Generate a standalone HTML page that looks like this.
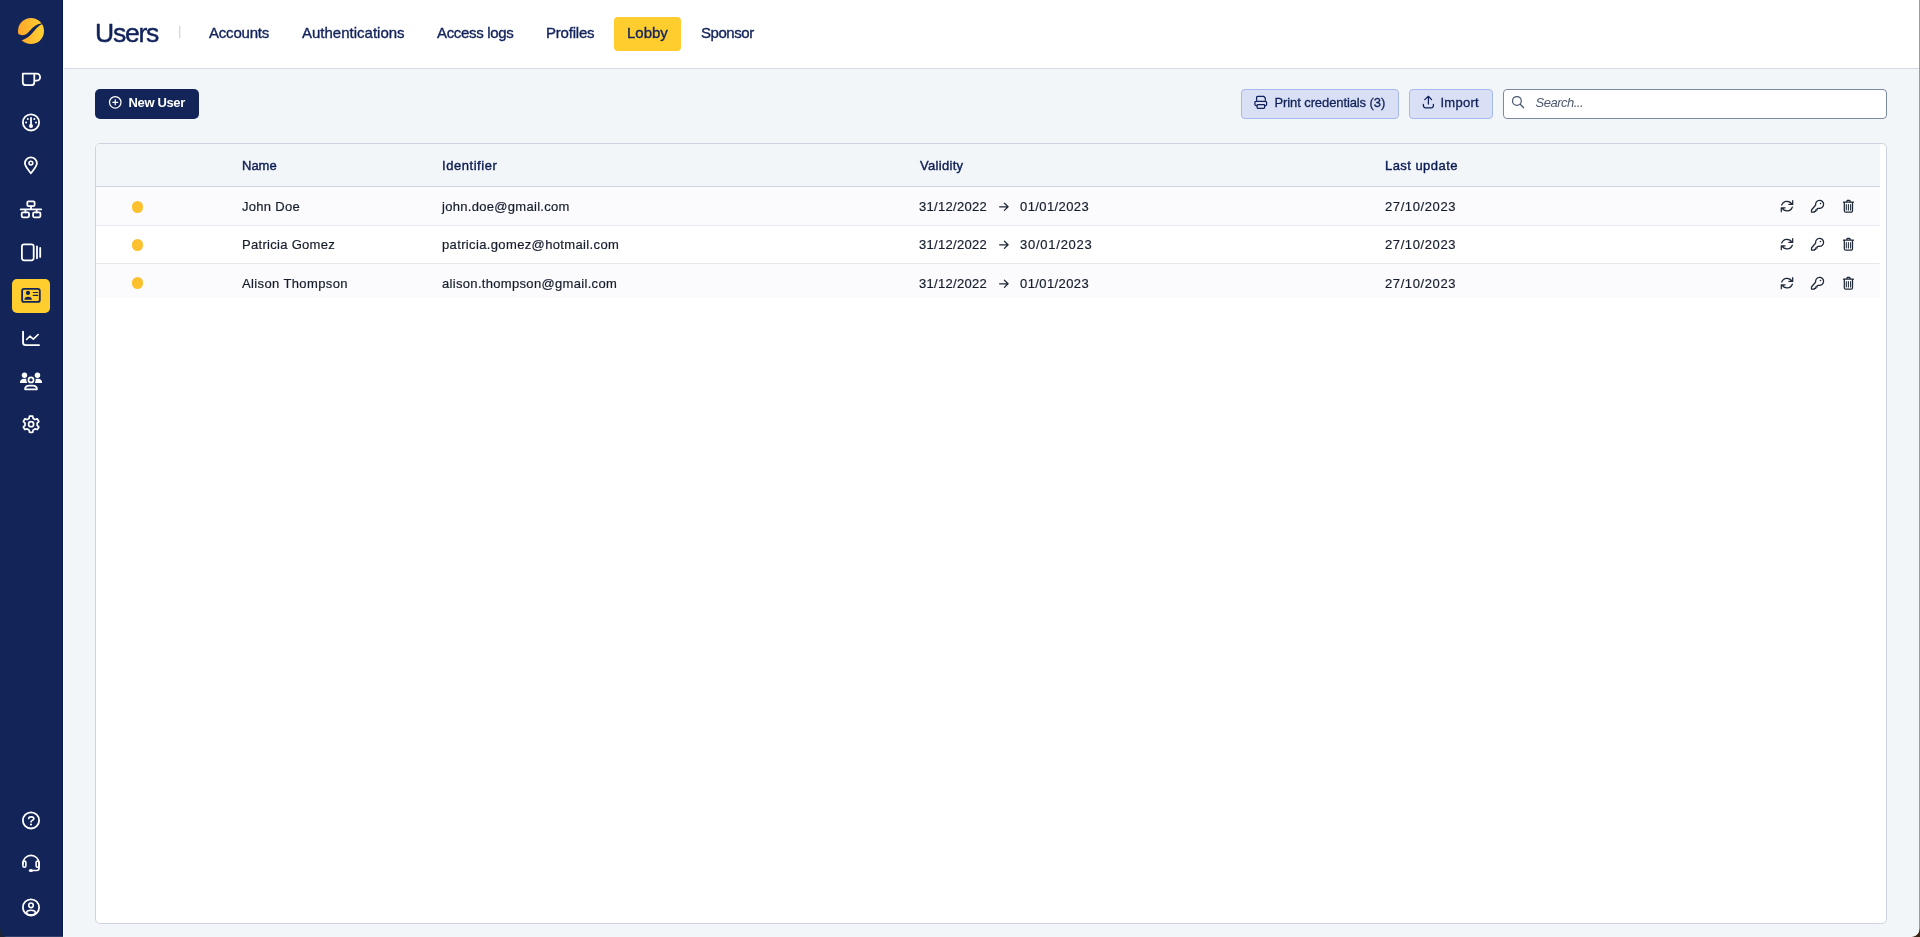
<!DOCTYPE html>
<html lang="en">
<head>
<meta charset="utf-8">
<title>Users - Lobby</title>
<style>
*{box-sizing:border-box;margin:0;padding:0}
html,body{width:1920px;height:937px;overflow:hidden}
body{position:relative;will-change:transform;background:#f2f6f9;font-family:"Liberation Sans",Arial,sans-serif;color:#1f2937}
.abs{position:absolute}
/* ---------- sidebar ---------- */
#side{position:absolute;left:0;top:0;width:63px;height:937px;background:#132558;border-right:1px solid #021a4e}
#sidegap{position:absolute;left:63px;top:0;width:1px;height:937px;background:#fff}
#side svg{position:absolute;left:0;top:0;overflow:visible}
#active{position:absolute;left:12px;top:279px;width:38px;height:34px;border-radius:5px;background:#ffcd2e}
/* ---------- header ---------- */
#head{position:absolute;left:64px;top:0;width:1856px;height:69px;background:#fff;border-bottom:1px solid #d4dae3}
#title{font-weight:normal;position:absolute;left:31px;top:17px;-webkit-text-stroke:0.45px #11225a;font-size:26.5px;line-height:33px;color:#11225a;letter-spacing:-1.25px;white-space:nowrap}
#sep{position:absolute;left:115px;top:26px;width:1px;height:12px;background:#d4dae3;box-shadow:1px 0 0 #eceff3}
.tab{-webkit-text-stroke:0.35px #11225a;position:absolute;top:17px;height:34px;line-height:32px;font-size:15px;color:#11225a;white-space:nowrap;padding:0 13px;border-radius:4px}
.tab.on{background:#ffcd2e;-webkit-text-stroke:0.35px #11225a}
/* ---------- toolbar ---------- */
.btn{display:block;font-family:inherit;border:0;padding:0;margin:0;text-align:left;cursor:pointer;position:absolute;top:89px;height:30px;border-radius:4px;font-size:13px;line-height:28px;white-space:nowrap}
#new{left:95px;width:104px;border-radius:5px;background:#132558;color:#fff;font-weight:bold}
#new span{position:absolute;left:33.5px;top:0;letter-spacing:-0.36px}
.lite{background:#d9e0f5;border:1px solid #a5b9ec;color:#11225a}
.lite span{position:absolute;top:-1px;-webkit-text-stroke:0.3px #11225a}
#search{position:absolute;left:1503px;top:89px;width:384px;height:30px;border:1px solid #7c8aa0;border-radius:4px;background:#fff}
#search span{position:absolute;left:31.5px;top:-1px;line-height:28px;font-size:13px;font-style:italic;color:#4d5970;letter-spacing:-0.5px}
/* ---------- table ---------- */
#card{position:absolute;left:95px;top:143px;width:1792px;height:781px;border:1px solid #cdd4df;border-radius:5px;background:#fff;overflow:hidden}
#thead{position:absolute;left:0;top:0;width:1784px;height:43px;background:#f2f6f9;border-bottom:1px solid #cfd6e1}
.th{position:absolute;top:0;line-height:44px;font-size:13px;color:#0d1c54;-webkit-text-stroke:0.4px #0d1c54;white-space:nowrap}
.row{position:absolute;left:0;width:1784px;font-size:13px;color:#161e2d;-webkit-text-stroke:0.2px #161e2d}
.row.odd{background:#fbfbfd}
.row.bb{border-bottom:1px solid #e6e8ee}
.row span{position:absolute;top:0;white-space:nowrap}
.dot{position:absolute;left:35.9px;width:11.5px;height:11.5px;border-radius:50%;background:#fdc02f}
.row svg{position:absolute;overflow:visible}
/* window corners */
.corner{position:absolute;bottom:0;width:11px;height:11px}
#wr{position:absolute;right:0;top:0;width:1px;height:937px;background:#9c9c9c}
#wb{position:absolute;left:0;bottom:0;width:1920px;height:1px;background:rgba(255,255,255,.13)}
</style>
</head>
<body>

<!-- ================= SIDEBAR ================= -->
<nav id="side" aria-label="Main navigation">
  <div id="active"></div>
  <svg width="63" height="937" viewBox="0 0 63 937" fill="none" stroke="#fff" stroke-width="1.8" stroke-linecap="round" stroke-linejoin="round">
    <defs><linearGradient id="lg" x1="0" y1="0" x2="1" y2="0"><stop offset="0" stop-color="#ffa52a"/><stop offset="1" stop-color="#ffd233"/></linearGradient></defs>
    <circle cx="31" cy="31" r="13" fill="url(#lg)" stroke="none"/>
    <path d="M16.5,33 C19,34.6 21.5,35.6 24.1,35.1 C27,34.5 28.5,32 31,29.5 C34,26.5 37,23.9 43,23.1 L43,23.8 C38.9,25.2 36.9,28 33.9,31.2 C30.9,34.5 28.3,37.6 24.3,39.2 C22.7,39.9 21,40.4 19,41.2 Z" fill="#132558" stroke="none"/>
    <path d="M22.8,73.7 V82.2 a3,3 0 0 0 3,3 H31.3 a3,3 0 0 0 3,-3 V73.7 Z M34.3,73.7 H36.7 a3.43,3.43 0 0 1 0,6.86 H34.3"/>
    <circle cx="31" cy="122.4" r="8.1"/><path d="M31,117.8 V125"/><circle cx="31" cy="125.9" r="2" fill="#fff" stroke="none"/>
    <circle cx="27.8" cy="119.1" r="1" fill="#fff" stroke="none"/>
    <circle cx="34.3" cy="119.1" r="1" fill="#fff" stroke="none"/>
    <circle cx="26.1" cy="122.4" r="1" fill="#fff" stroke="none"/>
    <circle cx="36" cy="122.4" r="1" fill="#fff" stroke="none"/>
    <path d="M30.9,173.2 C28,169.5 24.9,166.4 24.9,163.3 a6,6 0 0 1 12,0 C36.9,166.4 33.8,169.5 30.9,173.2 Z"/><circle cx="30.9" cy="163.1" r="1.9" stroke-width="1.6"/>
    <rect x="27.3" y="201.3" width="7.3" height="4.9" rx="1.2"/><path d="M20.7,209.4 H41.2 M31,206.2 V209.4 M25.4,209.4 V212.4 M36.7,209.4 V212.4"/><rect x="21.7" y="212.4" width="7.3" height="4.9" rx="1.2"/><rect x="33.1" y="212.4" width="7.3" height="4.9" rx="1.2"/>
    <rect x="21.9" y="244.3" width="11.8" height="16" rx="2.2"/><path d="M37,246.4 V258.3 M40.2,248 V256.9"/>
    <g stroke="#132558"><rect x="22.1" y="288.9" width="17.7" height="13" rx="2"/><circle cx="28" cy="292.9" r="2.1" fill="#132558" stroke="none"/><path d="M24.4,299.75 a3.75,3 0 0 1 7.5,0 Z" fill="#132558" stroke="none"/><path d="M33.3,292.5 H37.7 M33.3,295.4 H37.7" stroke-width="1.2"/></g>
    <path d="M23.05,331.7 V342.5 a2.6,2.6 0 0 0 2.6,2.6 H39" stroke-width="1.9"/><path d="M26.6,339.5 L29.9,336.2 L33.3,339.2 L38.2,334.5" stroke-width="1.6"/>
    <g fill="#fff" stroke="none"><circle cx="24.5" cy="375.3" r="2.7"/><circle cx="37.45" cy="375.3" r="2.7"/><path d="M19.9,382.9 C19.9,380.3 21.6,378.8 24,378.8 H26.2 C26.2,380.5 26.6,381.8 27.2,382.9 Z"/><path d="M42.1,382.9 C42.1,380.3 40.4,378.8 38,378.8 H35.8 C35.8,380.5 35.4,381.8 34.8,382.9 Z"/></g>
    <circle cx="31" cy="379.9" r="2.55" stroke-width="1.7"/><path d="M25.05,389.35 C25.05,386.9 27,385.55 29.3,385.55 H32.7 C35,385.55 36.95,386.9 36.95,389.35 Z" stroke-width="1.7"/>
    <path d="M29.01,418.47 L29.54,416.20 A8.15,8.15 0 0 1 32.66,416.20 L33.19,418.47 A6.10,6.10 0 0 1 35.02,419.53 L37.25,418.85 A8.15,8.15 0 0 1 38.81,421.55 L37.11,423.14 A6.10,6.10 0 0 1 37.11,425.26 L38.81,426.85 A8.15,8.15 0 0 1 37.25,429.55 L35.02,428.87 A6.10,6.10 0 0 1 33.19,429.93 L32.66,432.20 A8.15,8.15 0 0 1 29.54,432.20 L29.01,429.93 A6.10,6.10 0 0 1 27.18,428.87 L24.95,429.55 A8.15,8.15 0 0 1 23.39,426.85 L25.09,425.26 A6.10,6.10 0 0 1 25.09,423.14 L23.39,421.55 A8.15,8.15 0 0 1 24.95,418.85 L27.18,419.53 A6.10,6.10 0 0 1 29.01,418.47Z" stroke-width="1.7"/><circle cx="31.1" cy="424.2" r="2.55" stroke-width="1.7"/>
    <circle cx="31" cy="820.4" r="8.1"/><path d="M28.7,818.6 C28.7,817.4 29.6,816.9 31,816.9 H31.6 C32.9,816.9 33.8,817.7 33.8,818.8 C33.8,820.4 31,820.3 31,822" stroke-width="1.6"/><circle cx="31" cy="824.5" r="1.05" fill="#fff" stroke="none"/>
    <g stroke-width="1.6"><path d="M22.9,864 V863.5 a8.1,8.1 0 0 1 16.2,0 V868 a2.5,2.5 0 0 1 -2.5,2.5 H31"/><rect x="22.9" y="861.1" width="3" height="6.1" rx="1.5"/><rect x="36.1" y="861.1" width="3" height="6.1" rx="1.5"/><ellipse cx="30.9" cy="870.5" rx="2.1" ry="1.5" fill="#fff" stroke="none"/></g>
    <circle cx="31" cy="907.4" r="8.1"/><circle cx="31" cy="905.3" r="2.3" stroke-width="1.6"/><ellipse cx="31" cy="912.6" rx="4.3" ry="2.3" stroke-width="1.6"/>
  </svg>
</nav>
<div id="sidegap"></div>

<!-- ================= HEADER ================= -->
<header id="head">
  <h1 id="title">Users</h1>
  <div id="sep"></div>
  <a class="tab" style="left:132px;letter-spacing:-0.2px">Accounts</a>
  <a class="tab" style="left:225px">Authentications</a>
  <a class="tab" style="left:360px;letter-spacing:-0.32px">Access logs</a>
  <a class="tab" style="left:469px;letter-spacing:-0.2px">Profiles</a>
  <a class="tab on" style="left:550px">Lobby</a>
  <a class="tab" style="left:624px;letter-spacing:-0.45px">Sponsor</a>
</header>

<!-- ================= TOOLBAR ================= -->
<button type="button" class="btn" id="new"><span>New User</span></button>
<button type="button" class="btn lite" style="left:1241px;width:158px"><span style="left:32.5px;letter-spacing:-0.1px">Print credentials (3)</span></button>
<button type="button" class="btn lite" style="left:1409px;width:84px"><span style="left:30.5px;letter-spacing:0.25px">Import</span></button>
<div id="search"><span>Search...</span></div>

<svg class="abs" style="left:0;top:0;overflow:visible" width="1" height="1" fill="none" stroke-linecap="round" stroke-linejoin="round" stroke-width="1.25">
<g stroke="#fff"><circle cx="115.25" cy="102.3" r="5.75"/><path d="M112.8,102.3 H117.7 M115.25,99.85 V104.75"/></g>
<g stroke="#11225a">
<path d="M1256.6,100.3 V97.4 a1.1,1.1 0 0 1 1.1,-1.1 H1263.6 L1265.3,98 V100.3"/>
<path d="M1256.9,105.5 H1256 a1.1,1.1 0 0 1 -1.1,-1.1 V102.5 a1.1,1.1 0 0 1 1.1,-1.1 H1265.5 a1.1,1.1 0 0 1 1.1,1.1 V104.4 a1.1,1.1 0 0 1 -1.1,1.1 H1264.7"/>
<rect x="1257.1" y="104.6" width="7.5" height="3.7" rx=".8"/>
<path d="M1423.4,104.3 V105.6 a2.2,2.2 0 0 0 2.2,2.2 H1431.2 a2.2,2.2 0 0 0 2.2,-2.2 V104.3 M1428.4,104 V96.6 M1424.7,99.6 L1428.4,96.3 L1431.6,99.6"/>
</g>
<g stroke="#4d5970"><circle cx="1516.9" cy="100.9" r="4.4"/><path d="M1520.2,104.2 L1523.7,107.8"/></g>
</svg>

<!-- ================= TABLE ================= -->
<div id="card" role="table">
  <div id="thead" role="row">
    <div class="th" role="columnheader" style="left:146px">Name</div>
    <div class="th" role="columnheader" style="left:346px;letter-spacing:0.55px">Identifier</div>
    <div class="th" role="columnheader" style="left:824px;letter-spacing:0.3px">Validity</div>
    <div class="th" role="columnheader" style="left:1289px;letter-spacing:0.45px">Last update</div>
  </div>
  <div role="row" class="row odd bb" style="top:43px;height:39px;line-height:40.6px"><i class="dot" style="top:14.35px"></i><span style="left:146px;letter-spacing:0.3px">John Doe</span><span style="left:346px;letter-spacing:0.3px">john.doe@gmail.com</span><span style="left:823px;letter-spacing:0.3px">31/12/2022</span><svg style="left:0;top:0" width="1" height="1"><g transform="translate(-96,-187)" fill="none" stroke="#1f2937" stroke-width="1.25" stroke-linecap="round" stroke-linejoin="round"><path d="M999.6,206.8 H1008 M1004.4,203.2 L1008.1,206.8 L1004.4,210.4"/><path d="M1781.7,205.0 A5.6,5.6 0 0 1 1791.9,204.3 M1792.7,200.6 V204.4 H1788.9 M1792.3,207.2 A5.6,5.6 0 0 1 1782.1,207.9 M1781.3,211.7 V207.8 H1785.1"/><path d="M1815.66,205.00 A4,4 0 1 1 1818.9,208.24 L1817.2,208.6 V209.9 H1815.8 V211.3 H1814.4 V212.2 H1811.5 V210.0 Z"/><circle cx="1820.5" cy="203.5" r="0.8" fill="#1f2937" stroke="none"/><path d="M1843.5,202.2 H1853.4 M1846.6,202.0 L1847.2,200.4 H1849.8 L1850.4,202.0 M1844.3,202.4 V210.7 a1.5,1.5 0 0 0 1.5,1.5 H1851 a1.5,1.5 0 0 0 1.5,-1.5 V202.4"/><path d="M1846.3,204.4 V209.9 M1848.4,204.4 V209.9 M1850.6,204.4 V209.9" stroke-width="1.05"/></g></svg><span style="left:924px;letter-spacing:0.4px">01/01/2023</span><span style="left:1289px;letter-spacing:0.6px">27/10/2023</span></div>
  <div role="row" class="row bb" style="top:82px;height:38px;line-height:37.2px"><i class="dot" style="top:13.25px"></i><span style="left:146px;letter-spacing:0.3px">Patricia Gomez</span><span style="left:346px;letter-spacing:0.36px">patricia.gomez@hotmail.com</span><span style="left:823px;letter-spacing:0.3px">31/12/2022</span><svg style="left:0;top:0" width="1" height="1"><g transform="translate(-96,-226)" fill="none" stroke="#1f2937" stroke-width="1.25" stroke-linecap="round" stroke-linejoin="round"><path d="M999.6,244.8 H1008 M1004.4,241.2 L1008.1,244.8 L1004.4,248.4"/><path d="M1781.7,243.0 A5.6,5.6 0 0 1 1791.9,242.3 M1792.7,238.6 V242.4 H1788.9 M1792.3,245.2 A5.6,5.6 0 0 1 1782.1,245.9 M1781.3,249.7 V245.8 H1785.1"/><path d="M1815.66,243.00 A4,4 0 1 1 1818.9,246.24 L1817.2,246.6 V247.9 H1815.8 V249.3 H1814.4 V250.2 H1811.5 V248.0 Z"/><circle cx="1820.5" cy="241.5" r="0.8" fill="#1f2937" stroke="none"/><path d="M1843.5,240.2 H1853.4 M1846.6,240.0 L1847.2,238.4 H1849.8 L1850.4,240.0 M1844.3,240.4 V248.7 a1.5,1.5 0 0 0 1.5,1.5 H1851 a1.5,1.5 0 0 0 1.5,-1.5 V240.4"/><path d="M1846.3,242.4 V247.9 M1848.4,242.4 V247.9 M1850.6,242.4 V247.9" stroke-width="1.05"/></g></svg><span style="left:924px;letter-spacing:0.75px">30/01/2023</span><span style="left:1289px;letter-spacing:0.6px">27/10/2023</span></div>
  <div role="row" class="row odd" style="top:120px;height:34px;line-height:40.0px"><i class="dot" style="top:13.35px"></i><span style="left:146px;letter-spacing:0.38px">Alison Thompson</span><span style="left:346px;letter-spacing:0.32px">alison.thompson@gmail.com</span><span style="left:823px;letter-spacing:0.3px">31/12/2022</span><svg style="left:0;top:0" width="1" height="1"><g transform="translate(-96,-264)" fill="none" stroke="#1f2937" stroke-width="1.25" stroke-linecap="round" stroke-linejoin="round"><path d="M999.6,283.8 H1008 M1004.4,280.2 L1008.1,283.8 L1004.4,287.4"/><path d="M1781.7,282.0 A5.6,5.6 0 0 1 1791.9,281.3 M1792.7,277.6 V281.4 H1788.9 M1792.3,284.2 A5.6,5.6 0 0 1 1782.1,284.9 M1781.3,288.7 V284.8 H1785.1"/><path d="M1815.66,282.00 A4,4 0 1 1 1818.9,285.24 L1817.2,285.6 V286.9 H1815.8 V288.3 H1814.4 V289.2 H1811.5 V287.0 Z"/><circle cx="1820.5" cy="280.5" r="0.8" fill="#1f2937" stroke="none"/><path d="M1843.5,279.2 H1853.4 M1846.6,279.0 L1847.2,277.4 H1849.8 L1850.4,279.0 M1844.3,279.4 V287.7 a1.5,1.5 0 0 0 1.5,1.5 H1851 a1.5,1.5 0 0 0 1.5,-1.5 V279.4"/><path d="M1846.3,281.4 V286.9 M1848.4,281.4 V286.9 M1850.6,281.4 V286.9" stroke-width="1.05"/></g></svg><span style="left:924px;letter-spacing:0.4px">01/01/2023</span><span style="left:1289px;letter-spacing:0.6px">27/10/2023</span></div>
</div>

<div id="wr"></div><div id="wb"></div>
<div class="corner" style="left:0;width:6px;height:11px;background:radial-gradient(ellipse 6px 11px at 100% 0,rgba(0,0,0,0) 93%,#1c2634 101%)"></div>
<div class="corner" style="right:0;width:8px;height:9px;background:radial-gradient(ellipse 8px 9px at 0 0,rgba(0,0,0,0) 93%,#3a2519 101%)"></div>
</body>
</html>
